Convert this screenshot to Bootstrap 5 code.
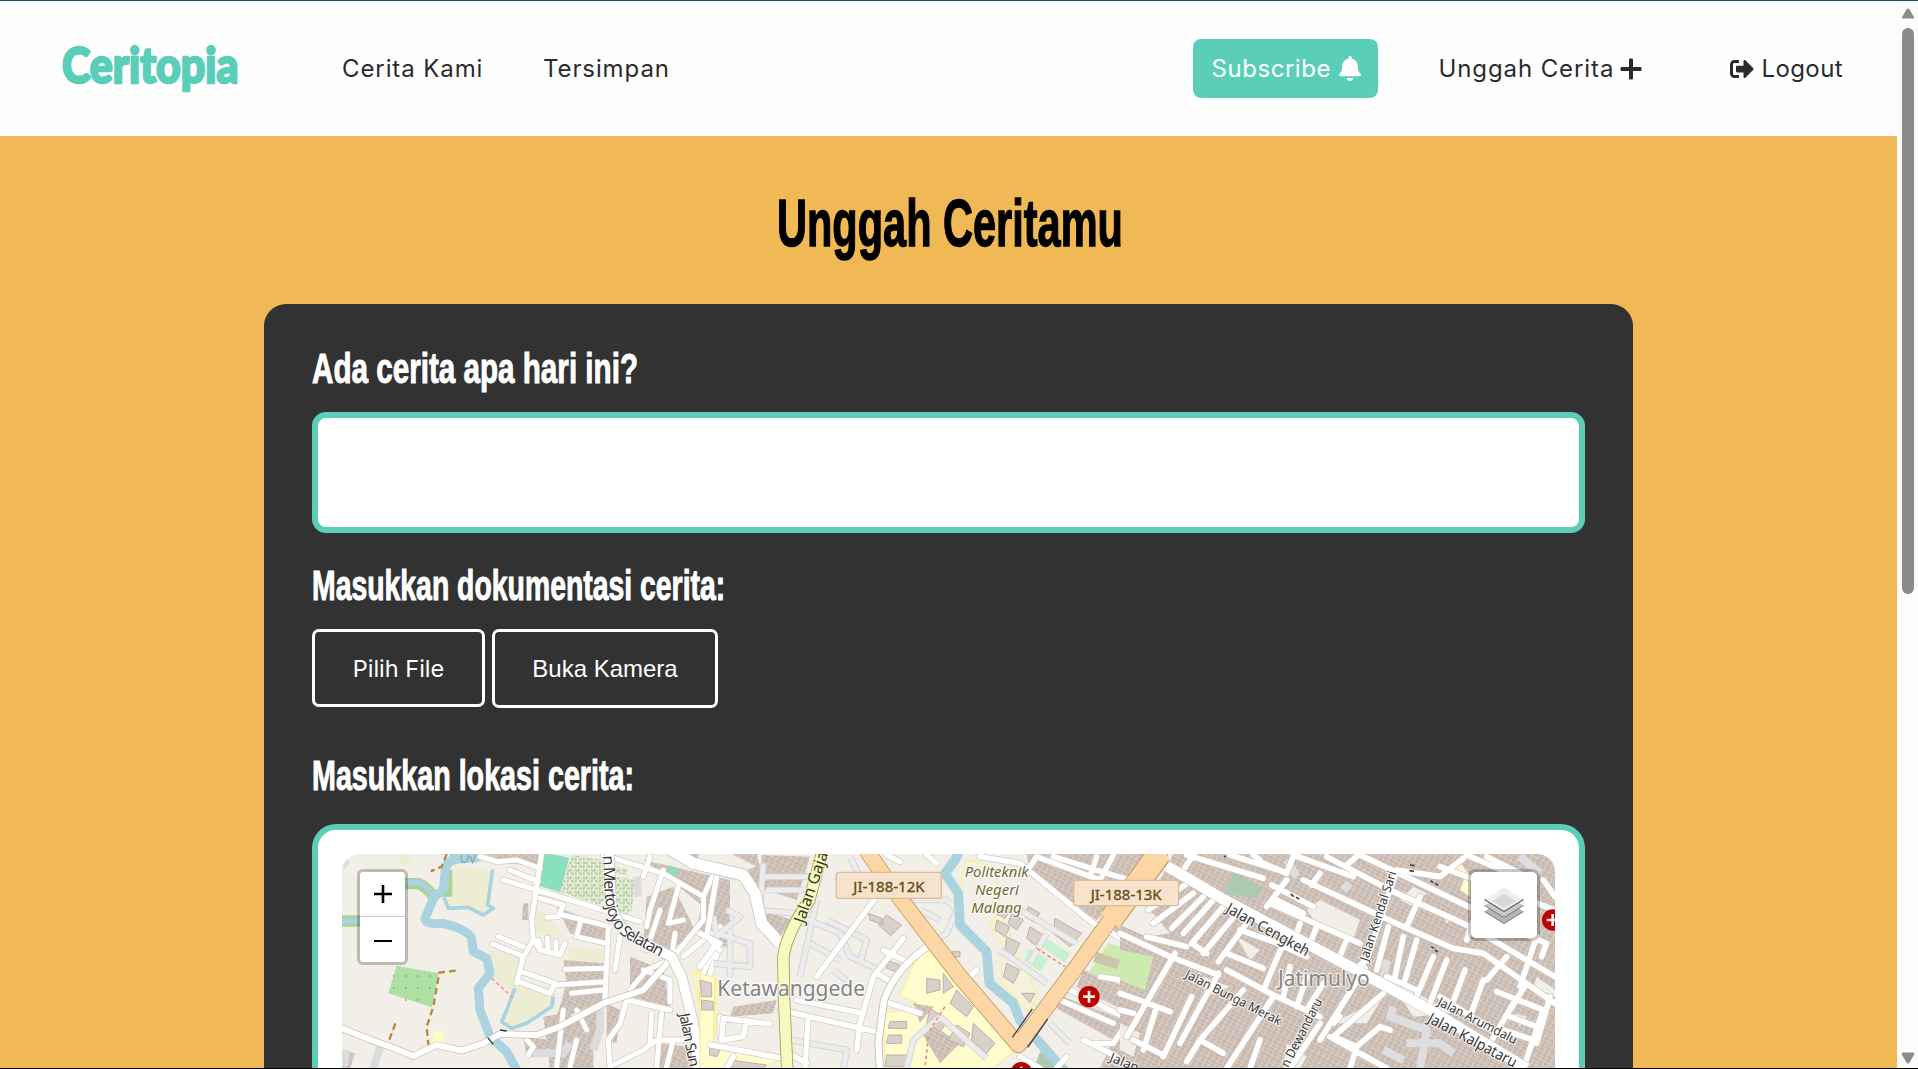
<!DOCTYPE html>
<html lang="id">
<head>
<meta charset="utf-8">
<meta name="viewport" content="width=device-width, initial-scale=1">
<title>Ceritopia</title>
<link rel="stylesheet" href="https://cdn.jsdelivr.net/npm/bootstrap@5.3.0/dist/css/bootstrap.min.css">
<style>
:root{--mint:#5bceb9;--ink:#323232;--sun:#f1b955}
body{height:1069px;overflow:hidden;border-top:1px solid #0b5763;border-bottom:1px solid #000;background:#fff;font-family:Inter,"Open Sans",sans-serif}
.site-nav{height:135px;padding:0 54px 0 62px;font-size:24px;letter-spacing:.9px;color:#2b2b2f;background:#fefefe}
.site-nav a{color:inherit;text-decoration:none;white-space:nowrap;line-height:36px;display:inline-flex;align-items:center}
.site-nav .brand-word{font:900 49px/50px Lato,"Open Sans",sans-serif;letter-spacing:0;color:var(--mint);width:176px;margin-right:104px;padding-bottom:9px;-webkit-text-stroke:2.4px var(--mint)}
.brand-word span,.fun span{display:inline-block;transform-origin:0 50%;white-space:nowrap}
.brand-word span{transform:scaleX(.875)}
.n-cerita{width:201px}
.site-nav .sub-btn{width:185px;height:59px;border-radius:8px;background:var(--mint);color:#fff;padding-left:18px;margin-right:60px;letter-spacing:.55px}
.n-up{width:292px}
.n-up svg{margin-left:6px}
.n-out{letter-spacing:.4px}
.n-out svg{margin-right:7px}
.stage{background:var(--sun);height:932px;padding-top:48px}
.fun{font-family:"Liberation Sans",sans-serif;font-weight:700;margin:0}
h1.fun{width:344px;font-size:66px;line-height:78px;color:#000;height:120px;-webkit-text-stroke:1.4px #000}
.story{width:1369px;background:var(--ink);border-radius:22px 22px 0 0;padding:38px 48px 0;height:764px;color:#fff}
.story .fun{font-size:43px;line-height:52px;-webkit-text-stroke:1px #fff}
.story textarea{height:121px;border:6px solid var(--mint);border-radius:14px;resize:none;background:#fff;display:block;margin-top:18px}
.t-head{transform:scaleX(.629)}
.t-a{transform:scaleX(.689)}
.t-b{transform:scaleX(.66)}
.t-c{transform:scaleX(.667)}
.story .t-gap1{margin-top:26px}
.story .t-gap2{margin-top:41px}
.pick-row{gap:7px;margin-top:18px;align-items:flex-start}
.pick{border:3px solid #fff;border-radius:7px;color:#fff;font-size:24px;padding:0;height:79px}
.pick-file{width:173px;height:78px;font-family:Inter,sans-serif;font-size:23.5px;padding-top:2px}
.pick-cam{width:226px;font-family:"Liberation Sans",sans-serif}
.map-box{border:6px solid var(--mint);border-bottom:0;border-radius:24px 24px 0 0;background:#fff;padding:24px 24px 0;height:244px;margin-top:23px}
.map-view{height:214px;border-radius:18px 18px 0 0;overflow:hidden;background:#f2efe9}
.map-view svg{display:block}
.map-ctl{position:absolute;background:#fff;border:3px solid rgba(0,0,0,.22);background-clip:padding-box}
.zoomer{left:15px;top:15px;width:51px;height:96px;border-radius:6px}
.zoomer div{height:45px}
.zoomer div:first-child{border-bottom:1px solid #ccc}
.layers{right:15px;top:15px;width:72px;height:72px;border-radius:8px}
.rail{width:21px;background:#fcfcfc}
.rail .thumb{width:12px;height:566px;border-radius:6px;background:#8b8b8b}
.rail-up{margin-top:7px;margin-bottom:9px}
.rail-dn{margin-bottom:4px}
.mt text{font-family:"Noto Sans",sans-serif}
.halo{paint-order:stroke;stroke:#fff;stroke-opacity:.75;stroke-width:7px;stroke-linejoin:round}
</style>
</head>
<body>
<div class="d-flex h-100">
<div class="flex-grow-1">
<nav class="site-nav d-flex align-items-center">
  <a class="brand-word" href="#"><span>Ceritopia</span></a>
  <a class="n-cerita" href="#">Cerita Kami</a>
  <a href="#">Tersimpan</a>
  <div class="ms-auto d-flex align-items-center">
    <a class="sub-btn" href="#">Subscribe
      <svg class="ms-2" width="22" height="25" viewBox="0 0 448 512" fill="currentColor"><path d="M224 512c35.300 0 63.900-28.600 63.900-64H160.100c0 35.400 28.600 64 63.900 64zm215.400-149.700c-19.300-20.800-55.500-52-55.500-154.300 0-77.700-54.500-139.900-127.900-155.200V32c0-17.700-14.300-32-32-32s-32 14.300-32 32v20.800C118.600 68.100 64.100 130.300 64.100 208c0 102.300-36.200 133.500-55.500 154.300-6 6.400-8.700 14.100-8.600 21.700.1 16.400 13 32 32.100 32h383.800c19.100 0 32-15.600 32.100-32 .1-7.600-2.600-15.300-8.600-21.700z"/></svg></a>
    <a class="n-up" href="#">Unggah Cerita
      <svg width="22" height="22" viewBox="0 0 22 22" fill="currentColor"><path d="M9 1.500Q9 .5 10 .5h2q1 0 1 1V9h7.500q1 0 1 1v2q0 1-1 1H13v7.500q0 1-1 1h-2q-1 0-1-1V13H1.500q-1 0-1-1v-2q0-1 1-1H9z"/></svg></a>
    <a class="n-out" href="#"><svg width="24" height="20" viewBox="0 0 512 400" fill="currentColor"><path d="M497 217 329 385c-15 15-41 4.500-41-17v-96H152c-13 0-24-11-24-24v-96c0-13 11-24 24-24h136V32c0-21 26-32 41-17l168 168c9 9.500 9 24.500 0 34zM192 380v-40c0-7-5-12-12-12H96c-18 0-32-14-32-32V104c0-18 14-32 32-32h84c7 0 12-5 12-12V20c0-7-5-12-12-12H96C43 8 0 51 0 104v192c0 53 43 96 96 96h84c7 0 12-5 12-12z"/></svg><span>Logout</span></a>
  </div>
</nav>
<main class="stage">
  <h1 class="fun mx-auto"><span class="t-head">Unggah Ceritamu</span></h1>
  <section class="story mx-auto">
    <h2 class="fun"><span class="t-a">Ada cerita apa hari ini?</span></h2>
    <textarea class="w-100" aria-label="Cerita"></textarea>
    <h2 class="fun t-gap1"><span class="t-b">Masukkan dokumentasi cerita:</span></h2>
    <div class="d-flex pick-row">
      <button class="btn pick pick-file">Pilih File</button>
      <button class="btn pick pick-cam">Buka Kamera</button>
    </div>
    <h2 class="fun t-gap2"><span class="t-c">Masukkan lokasi cerita:</span></h2>
    <div class="map-box">
      <div class="map-view position-relative">
<svg class="mt" width="1213" height="214" viewBox="342 854 1213 214">
<defs>
<pattern id="bld" width="17" height="23" patternUnits="userSpaceOnUse" patternTransform="rotate(28)"><rect width="17" height="23" fill="#dbd0c8"/><rect x="1" y="1" width="14" height="9" fill="#c6b7ac"/><rect x="3" y="12" width="13" height="9" fill="#c8b9ae"/></pattern>
<pattern id="allot" width="24" height="22" patternUnits="userSpaceOnUse"><rect width="24" height="22" fill="#cdf5d2"/><path d="M3 4l6 3M15 2l-3 7M4 18l3-6M17 13l5 4" stroke="#f1887c" stroke-width="3.500"/></pattern>
<g id="ra" fill="none" stroke-linecap="round" stroke-linejoin="round">
<path d="M510 140L560 155L620 150L690 175M600 180L685 215M580 210L680 240L880 300L990 335M695 130L680 230L665 330L670 390L640 440L620 520M690 265L760 285L745 320L710 322M760 315L900 350M810 340L800 380L890 400M565 380L640 410M548 402L630 435M635 485L735 520L720 550L625 515M735 525L885 515M765 478L885 475M895 350L885 570M785 550L880 540M675 395L690 420L750 435M685 390L690 410M712 385L714 415M738 395L738 425M765 400L750 435M800 600L830 660M760 600L740 770M800 690L780 770M650 690L670 710L655 735M950 570L930 640L895 690L900 770M880 580L790 620M900 770L1000 720L1040 690L1125 690M1025 610L1020 700M950 570L1080 600M1055 610L1040 770M1090 690L1070 770M1000 480L1080 510L1080 575M960 540L1010 480L1080 450M880 135L1060 190L1180 260M1060 180L1020 300L1010 350M1105 230L1075 340L1120 330M1050 300L1010 420M1095 370L1085 440M1180 260L1180 330L1090 440M1180 260L1220 170M1165 370L1220 400L1180 490M1020 140L1000 200M930 380L915 480M1120 440L1230 350M1230 410L1200 490M1230 620L1230 720"/></g>
<g id="rb" fill="none" stroke-linecap="round" stroke-linejoin="round">
<path d="M530 260L350 500M610 385L520 500L480 640L470 720M550 420L620 455M530 490L580 520M290 570L490 610M240 600L540 668M325 620L315 775M555 575L660 610M50 200L20 380L60 420M0 370L60 400M30 705L250 745M70 625L210 642M140 630L130 680L65 690L70 625M0 470L50 400M250 720L320 760M80 775L100 740M560 135L600 155M680 135L710 160M800 510L830 480M890 620L880 650M840 140L960 160L1180 340L1350 430M970 200L1010 140M1010 140L1200 210L1240 135M1190 140L1170 200M1060 140L1350 230M1200 500L1260 510L1330 555M1090 530L1350 660M1080 570L1240 640M1340 550L1240 700L1180 700M1330 650L1290 730M1150 690L1250 740M960 740L1020 775M1070 775L1100 740"/></g>
<g id="rc" fill="none" stroke-linecap="round" stroke-linejoin="round">
<path d="M220 135L180 195M200 135L430 205M330 135L500 188L520 140M430 160L500 190M400 135L420 150M520 135L700 200M600 190L575 225M440 290L500 210M455 225L580 290M470 270L550 310M550 210L850 350L1000 415L1090 430L1305 580M620 140L820 245L1050 350L1305 500M715 135L680 165M720 135L900 220L1150 340M450 280L720 400M360 360L460 395L560 440M320 430L430 475M0 370L150 440L295 495M80 380L200 410M320 480L470 560L600 620M0 550L70 575L150 605M0 600L40 610M195 225L85 300M220 250L100 340M250 260L155 355M280 270L190 370M310 290L215 400L260 430M350 310L250 430M380 340L295 455M165 430L20 680M110 590L70 720M215 560L130 740M295 490L180 700M370 540L240 690L200 755M460 560L320 775M420 690L390 775M40 690L130 735M240 690L310 730M490 400L435 530M540 340L520 400M680 390L650 460M590 350L570 400M510 470L490 560M560 500L530 590M610 520L560 600M735 475L600 690M790 550L640 680L710 710L780 650L810 660M600 640L510 775M630 680L800 775M710 710L690 775M830 180L960 200L1030 145M830 180L740 450L700 480M805 350L770 480M850 380L825 500M890 390L855 510M940 440L885 570M980 450L930 580M1035 480L990 600M1090 510L1050 620M800 500L890 540M1130 545L1270 600L1210 775M1180 580L1110 700M1170 620L1250 650M1150 660L1240 690M960 560L1150 680M960 170L1305 300M900 260L860 350M1060 330L1040 390M1250 380L1200 530M1160 440L1100 510M1220 520L1170 600M1100 140L1200 190M1040 135L1190 200M1270 210L1305 260M1230 380L1280 400L1265 440M1290 560L1250 700M660 620L640 640"/></g>
</defs>
<rect x="342" y="854" width="1213" height="215" fill="#f2efe9"/>
<g transform="translate(310 810) scale(.33333)">
 <g fill="#ecedd2"><path d="M430 165L550 185L530 310L480 290L415 290ZM540 420L645 445L610 560L545 500ZM620 530L735 545V585L650 640L590 650L575 620ZM680 290L740 350L775 390L670 370ZM775 410L880 420V458L775 450ZM270 130H298L307 166H268Z"/></g>
 <g fill="url(#bld)"><path d="M520 130H695L690 170L600 160ZM740 290L890 350L885 400L780 370ZM760 450L885 460L880 580L740 620L770 520ZM700 620L870 590L850 700L850 775H720ZM890 580L930 600L920 700L890 690ZM960 440L1060 480L1080 590L960 560ZM1000 150L1260 210V340L1190 300L1060 190ZM1010 260L1090 230L1160 370L1080 420L1000 400ZM1070 130H1170L1150 165ZM1190 240L1260 250V420L1160 350ZM640 280H655V330H635ZM96 720L135 730L120 775H96ZM640 680L720 690L700 740L650 740ZM1040 700L1140 710L1150 775H1040Z"/></g>
 <path d="M705 130L775 145L750 245L687 225Z" fill="#88e0be" stroke="#9dd8bb" stroke-width="4"/><path d="M1078 165L1103 178L1090 210L1065 200Z" fill="#88e0be"/>
 <path d="M785 135L880 150L900 250L870 285L750 245ZM915 200L978 210L965 300L940 345L915 290ZM915 170L950 175V195L915 190Z" fill="url(#allot)"/>
 <path d="M260 467L387 490L365 592L235 550Z" fill="#aedfa3"/><g fill="#6d9e68"><path d="M249 496h4v4h-4zM285 496h4v4h-4zM321 496h4v4h-4zM357 496h4v4h-4zM249 532h4v4h-4zM285 532h4v4h-4zM321 532h4v4h-4zM357 532h4v4h-4zM285 568h4v4h-4zM321 568h4v4h-4z"/></g>
 <path d="M375 662L403 666L395 700H365Z" fill="#ffffc0"/>
 <g fill="none" stroke="#a8d39c" stroke-width="34"><path d="M270 221H325Q350 230 372 262M96 333H160"/><path d="M420 140H500M410 180V260"/></g>
 <g fill="none" stroke="#aad3df" stroke-linejoin="round"><path stroke-width="17" d="M270 217H325Q350 227 375 262M96 333H160"/><path stroke-width="27" d="M510 140L440 148Q405 152 405 190L400 240L372 262L345 325Q345 345 400 340Q475 360 485 385L490 425L530 445L540 490L505 535L510 600L540 680L590 725L620 780"/><path stroke-width="11" d="M548 178L533 285L550 295L520 315L475 292L415 295L402 262M615 535L590 600L575 635L605 655L650 640L725 590L730 560"/></g>
 <path d="M455 134Q450 155 463 158Q476 157 474 134M480 138L488 158L496 134" fill="none" stroke="#7fa9b8" stroke-width="4"/>
 <g fill="none" stroke="#b58a3b" stroke-width="7" stroke-dasharray="20 12"><path d="M437 482L388 488L370 590L350 650L355 705M256 640L232 705M410 132L395 170L362 184"/></g>
 <path d="M545 505L610 565" stroke="#f59a90" stroke-width="5" stroke-dasharray="11 8"/>
 <path d="M1150 480L1220 510L1215 660L1190 740L1260 755M1150 480L1180 660" fill="none" stroke="#fbf5a8" stroke-width="9"/>
 <g fill="#cdbcae" stroke="#b9a596" stroke-width="2"><path d="M1168 545L1210 540L1215 585L1172 590ZM1172 600L1212 595L1210 670L1182 672ZM1200 708L1232 718L1225 740L1195 732Z"/></g>
 <path d="M870 590V660L850 720M980 200L985 260M670 730H760L780 700M110 150L96 170M210 710L190 775M100 770L110 720" fill="none" stroke="#dcdcdf" stroke-width="24"/>
 <use href="#ra" stroke="#cfc8c3" stroke-width="19"/><use href="#ra" stroke="#fff" stroke-width="15"/>
 <g fill="none" stroke-linejoin="round"><path d="M90 652Q180 690 240 710L310 738L380 705L455 722L520 700L570 672L680 675L750 650L880 580L1000 540L1080 450" stroke="#c4bdb8" stroke-width="22"/><path d="M90 652Q180 690 240 710L310 738L380 705L455 722L520 700L570 672L680 675L750 650L880 580L1000 540L1080 450" stroke="#fff" stroke-width="18"/>
 <path d="M897 125L902 250Q905 335 960 375L1085 440L1115 500Q1130 560 1150 640L1165 780" stroke="#c4bdb8" stroke-width="33"/><path d="M897 125L902 250Q905 335 960 375L1085 440L1115 500Q1130 560 1150 640L1165 780" stroke="#fff" stroke-width="29"/></g>
 <path d="M570 660L590 663M533 683L550 703" stroke="#333" stroke-width="4"/>
</g>
<g transform="translate(700 810) scale(.33333)">
 <g fill="#fffccd" stroke="#f7ef9f" stroke-width="4"><path d="M800 150L880 170L900 290L940 400L1015 560L985 605L905 520V400L870 345L890 315L780 220Z" fill="#f6f2dd"/><path d="M650 440L690 420L940 725L880 775H555L550 605L600 605L650 580L600 555ZM0 490L45 505L40 700L250 745L180 775H0Z"/></g>
 <path d="M800 172L872 176L890 300L830 270L785 222Z" fill="#f2efe9"/>
 <g fill="url(#bld)"><path d="M90 130H170L180 175ZM185 135L330 140L290 270L185 235ZM180 300L280 330L240 380L190 370ZM100 590L230 570L220 610L90 620ZM980 130H1340L1250 280L1190 330L990 200ZM1150 480L1350 560V640L1130 530ZM1090 560L1350 660V775H1200L1240 690L1060 590ZM1250 330L1350 360V420L1240 370ZM640 580L700 590L660 640ZM690 640L780 700L720 760L660 660ZM130 185L180 165L190 240L150 230Z"/></g>
 <g fill="#d9d0c9" stroke="#bfafa4" stroke-width="3"><path d="M560 315L605 345L572 377L535 345ZM505 310L545 325L550 345L510 330ZM1065 325L1145 370L1110 410L1060 370ZM890 330L930 350L915 380L885 360ZM935 310L970 330L950 360L925 340ZM990 350L1030 375L1005 405L980 385ZM920 380L960 400L940 440L915 420ZM920 460L960 480L940 520L910 500ZM965 550L1005 550L990 578ZM900 285L930 300L915 325L890 312ZM985 290L1020 310L1000 335L975 320ZM680 505L720 510V540L680 550ZM730 490L760 530L730 550ZM770 540L820 590L800 620L750 580ZM690 595L745 630L720 665L680 640ZM770 645L810 670L790 710L745 690ZM820 640L885 700L860 730L815 690ZM570 635H620V655H565ZM565 675H605V700H560ZM560 735H620V770H555ZM0 510L35 520V560H5ZM5 570L40 575V600H5ZM90 750L200 765L190 775H80ZM560 450L600 465L590 485L560 475ZM30 710L60 720L50 740L28 735ZM755 425L780 425V440L762 442Z"/></g>
 <path d="M1225 400L1370 440L1335 540L1165 490Z" fill="#cdebb0"/><path d="M1190 425L1260 450L1250 478L1180 455Z" fill="#c8c5ab"/><path d="M985 415L1045 445L1022 485L972 452ZM1040 385L1110 430L1095 460L1025 410Z" fill="#c8f2cf"/><path d="M1020 725L1070 745L1085 780H1000Z" fill="#aacbaf"/>
 <g fill="none" stroke-linejoin="round"><path id="g1" d="M190 160L180 300L280 310L420 370L450 440L540 480M190 200H340M200 240H310M350 270L300 500M450 140L500 240M380 330L500 390L480 460M640 270L740 270L770 300L740 370L690 400M40 320L50 380L120 320L80 300M90 360V500M40 460L150 470V400L50 370M400 480L450 520M270 690L440 720L430 775M620 775L640 690L720 620M720 620L860 745M960 300L1130 400M900 420L1040 520M990 460L1040 370M1050 640L1110 700M410 200L460 260M330 400L420 450M660 300L720 330" stroke="#d2d1d0" stroke-width="20"/>
 <path d="M190 160L180 300L280 310L420 370L450 440L540 480M190 200H340M200 240H310M350 270L300 500M450 140L500 240M380 330L500 390L480 460M640 270L740 270L770 300L740 370L690 400M40 320L50 380L120 320L80 300M90 360V500M40 460L150 470V400L50 370M400 480L450 520M270 690L440 720L430 775M620 775L640 690L720 620M720 620L860 745M960 300L1130 400M900 420L1040 520M990 460L1040 370M1050 640L1110 700M410 200L460 260M330 400L420 450M660 300L720 330" stroke="#ececee" stroke-width="15"/></g>
 <path d="M685 680L675 775M735 590L690 660M1010 415L1095 470" stroke="#f08f86" stroke-width="5" stroke-dasharray="11 8" fill="none"/>
 <path d="M778 125L765 150L735 190L775 250L780 345L860 425L868 520L940 580L960 630L1095 785" fill="none" stroke="#aad3df" stroke-width="29" stroke-linejoin="round"/>
 <use href="#rb" stroke="#cfc8c3" stroke-width="20"/><use href="#rb" stroke="#fff" stroke-width="16"/>
 <g fill="none" stroke-linejoin="round"><path d="M-110 105L-20 160L130 195L165 250L185 340L240 400" stroke="#c4bdb8" stroke-width="38"/><path d="M-110 105L-20 160L130 195L165 250L185 340L240 400" stroke="#fff" stroke-width="34"/>
 <path d="M690 405Q590 470 552 570L535 700L540 780" stroke="#c4bdb8" stroke-width="24"/><path d="M690 405Q590 470 552 570L535 700L540 780" stroke="#fff" stroke-width="19"/>
 <path d="M367 125L328 270Q260 370 250 440L252 560L262 785" stroke="#9aa34a" stroke-width="37"/><path d="M367 125L328 270Q260 370 250 440L252 560L262 785" stroke="#f7fabf" stroke-width="32"/>
 <path d="M500 122L600 265L780 500L955 705L1130 470L1245 310L1385 120" stroke="#b5894a" stroke-width="49"/><path d="M500 122L600 265L780 500L955 705L1130 470L1245 310L1385 120" stroke="#fcd6a4" stroke-width="45"/></g>
 <path d="M997 597L937 682M1043 627L983 712" stroke="#444" stroke-width="4"/>
</g>
<g transform="translate(1120 810) scale(.33333)">
 <path d="M160 130H1310V780H0V350L80 290Z" fill="url(#bld)"/>
 <g fill="#f2efe9"><path d="M10 310L80 290L150 370L80 380L0 345ZM600 270L720 330L700 385L590 340L560 300ZM800 500L1000 610L880 620ZM640 640L790 560L740 640ZM840 270L880 230L920 250L880 290ZM0 640L60 670L40 740L0 720ZM250 500L330 530L260 560ZM350 380L420 420L390 450ZM500 700L560 740L540 775H490ZM1180 610L1220 620L1200 650ZM1250 500L1305 540V560L1240 530ZM960 300L1010 320L980 340Z"/></g>
 <path d="M0 420L100 440L75 540L0 510Z" fill="#cdebb0"/><path d="M340 188L425 235L405 265L310 250Z" fill="#aacbaf"/>
 <path d="M1020 155L1050 200V260L1020 240L1035 200L995 190Z" fill="#fffccd"/>
 <g fill="none" stroke="#dedee0" stroke-width="24" stroke-linejoin="round"><path d="M820 590L810 620L920 660L900 775M860 700H960L1000 730M790 720L850 750M500 150L530 200M670 240L690 220M1200 140L1260 190M800 450L790 510"/></g>
 <use href="#rc" stroke="#cdc2ba" stroke-width="21"/><use href="#rc" stroke="#fff" stroke-width="17"/>
 <path d="M130 162L310 268L700 475L930 600L1220 775" fill="none" stroke="#c9c0b9" stroke-width="35"/><path d="M130 162L310 268L700 475L930 600L1220 775" fill="none" stroke="#fff" stroke-width="32"/>
 <path d="M118 132L-25 325" stroke="#b5894a" stroke-width="74"/><path d="M122 125L-30 332" stroke="#fcd6a4" stroke-width="69"/>
 <g stroke="#444" stroke-width="5"><path d="M512 252l10 8M528 262l10 5M870 165l14 2M868 182l14 2M932 212l8 6M945 220l10 6M934 410l8 5M945 420l8 6M312 138l5 3"/></g>
</g>
<!-- place, road and shield labels -->
<g transform="translate(310 810) scale(.33333)" fill="#3a3a3a" font-size="48">
 <path id="mp" d="M879 137L884 250Q888 335 940 380L1090 462" fill="none"/>
 <text class="halo"><textPath href="#mp" textLength="385">n Mertojoyo Selatan</textPath></text>
 <text class="halo" transform="translate(1108 613) rotate(79)" font-size="44" textLength="162">Jalan Sun</text>
</g>
<g transform="translate(700 810) scale(.33333)">
 <text class="halo" style="stroke:#f7fabf" transform="translate(312 342) rotate(-71)" font-size="48" fill="#3a3a2a">Jalan Gaja</text>
 <g font-size="44" fill="#6b4c14" stroke="#6b4c14"><rect x="409" y="187" width="315" height="78" rx="7" fill="#f5e3ce" stroke="#dfbb93" stroke-width="4"/><text x="460" y="246" textLength="214" lengthAdjust="spacingAndGlyphs">JI-188-12K</text>
 <rect x="1121" y="211" width="315" height="76" rx="7" fill="#f5e3ce" stroke="#dfbb93" stroke-width="4"/><text x="1172" y="271" textLength="213" lengthAdjust="spacingAndGlyphs">JI-188-13K</text></g>
 <g class="halo" font-size="43" font-style="italic" fill="#6c6c30"><text x="794" y="200" textLength="192" lengthAdjust="spacingAndGlyphs">Politeknik</text><text x="825" y="254" textLength="132" lengthAdjust="spacingAndGlyphs">Negeri</text><text x="814" y="309" textLength="151" lengthAdjust="spacingAndGlyphs">Malang</text></g>
 <text class="halo" x="52" y="557" font-size="65" textLength="443" lengthAdjust="spacingAndGlyphs" fill="#858585">Ketawanggede</text>
 <g fill="#bf0000"><circle cx="1167" cy="560" r="32"/><circle cx="964" cy="788" r="32"/></g><path d="M1149 560h36M1167 542v36M946 788h36M964 770v36" stroke="#eee" stroke-width="8"/>
 <text class="halo" transform="translate(1226 753) rotate(22)" font-size="40" fill="#3a3a3a">Jalan</text>
</g>
<g transform="translate(1120 810) scale(.33333)" fill="#3a3a3a">
 <text class="halo" transform="translate(315 305) rotate(29)" font-size="46" textLength="278" lengthAdjust="spacingAndGlyphs">Jalan Cengkeh</text>
 <text class="halo" transform="translate(193 502) rotate(27)" font-size="38" textLength="318" lengthAdjust="spacingAndGlyphs">Jalan Bunga Merak</text>
 <text class="halo" transform="translate(743 455) rotate(-72)" font-size="38" textLength="280" lengthAdjust="spacingAndGlyphs">Jalan Kendal Sari</text>
 <text class="halo" transform="translate(950 584) rotate(27)" font-size="38" textLength="262" lengthAdjust="spacingAndGlyphs">Jalan Arumdalu</text>
 <text class="halo" transform="translate(920 635) rotate(28)" font-size="46" textLength="295" lengthAdjust="spacingAndGlyphs">Jalan Kalpataru</text>
 <text class="halo" transform="translate(505 775) rotate(-63)" font-size="39" textLength="226" lengthAdjust="spacingAndGlyphs">n Dewandaru</text>
 <text class="halo" x="474" y="528" font-size="65" textLength="275" lengthAdjust="spacingAndGlyphs" fill="#858585">Jatimulyo</text>
 <circle cx="1298" cy="330" r="32" fill="#bf0000"/><path d="M1280 330h36M1298 312v36" stroke="#eee" stroke-width="8"/>
</g>
</svg>
        <div class="map-ctl zoomer">
          <div class="d-flex align-items-center justify-content-center"><svg width="18" height="18"><path d="M0 9H18M9 0V18" stroke="#000" stroke-width="2.600"/></svg></div>
          <div class="d-flex align-items-center justify-content-center"><svg width="18" height="18"><path d="M0 10H18" stroke="#000" stroke-width="2"/></svg></div>
        </div>
        <div class="map-ctl layers d-flex align-items-center justify-content-center">
          <svg width="40" height="40" viewBox="0 0 40 40"><path d="M20 14 39.500 26.500 20 38.500.5 26.500z" fill="#b4b4b4"/><path d="M.5 26.500 20 38.500 39.500 26.500" fill="none" stroke="#777"/><path d="M20 8 39.500 20.500 20 32.500.5 20.500z" fill="#c8c8c8"/><path d="M.5 20.500 20 32.500 39.500 20.500" fill="none" stroke="#777"/><path d="M20 2 39.500 14.500 20 26.500.5 14.500z" fill="#f0f0f0"/><path d="M20 8.500 32 16 20 23.500 8 16z" fill="#d9d9d9"/><path d="M.5 14.500 20 26.500 39.500 14.500" fill="none" stroke="#666" stroke-width="1.200"/></svg>
        </div>
      </div>
    </div>
  </section>
</main>
</div>
<aside class="rail d-flex flex-column align-items-center">
  <svg class="rail-up" width="14" height="11"><path d="M7 .5Q8 .5 8.500 1.500L13 9Q13.500 10.500 12 10.500H2Q.5 10.500 1 9L5.500 1.500Q6 .5 7 .5Z" fill="#8b8b8b"/></svg>
  <div class="thumb"></div>
  <svg class="rail-dn mt-auto" width="14" height="12"><path d="M7 11.500Q6 11.500 5.500 10.500L.8 2.500Q0 .5 2 .5H12Q14 .5 13.200 2.500L8.500 10.500Q8 11.500 7 11.500Z" fill="#8b8b8b"/></svg>
</aside>
</div>
<script src="https://cdn.jsdelivr.net/npm/bootstrap@5.3.0/dist/js/bootstrap.bundle.min.js"></script>
</body>
</html>
